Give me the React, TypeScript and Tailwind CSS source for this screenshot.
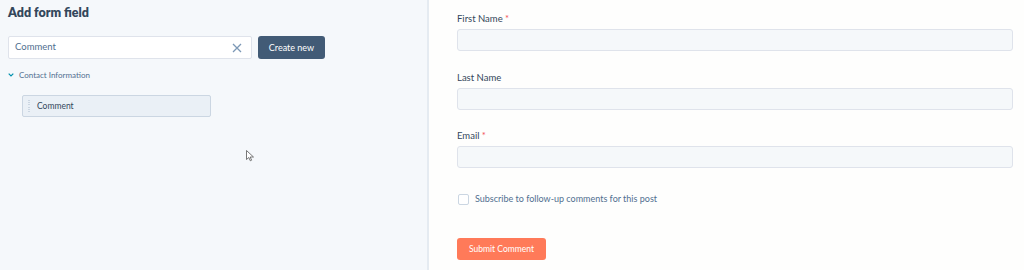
import React from "react";

function Field({ label, required, mt }: { label: string; required?: boolean; mt: string }) {
  return (
    <div className={`flex flex-col ${mt}`}>
      <div className="h-[12px] text-[9.5px] leading-[12px] text-[#33475b]">
        {label}
        {required && <span className="text-[#f2545b]"> *</span>}
      </div>
      <div className="mt-[4px] h-[22px] w-[556px] rounded-[3px] border border-[#dfe3eb] bg-[#f5f8fa]" />
    </div>
  );
}

export default function App() {
  return (
    <div
      className="flex h-[270px] w-[1024px] overflow-hidden"
      style={{ fontFamily: "Lato, 'Noto Sans', sans-serif" }}
    >
      {/* Left panel */}
      <div className="relative flex h-full w-[427px] flex-col bg-[#f5f8fb] pl-[8px]">
        <div className="mt-[5px] h-[16px] text-[12.5px] font-extrabold leading-[16px] text-[#33475b]">Add form field</div>
        <div className="mt-[15px] flex items-center gap-[6px]">
          <div className="flex h-[23px] w-[244px] items-center justify-between rounded-[2px] border border-[#dfe3eb] bg-white pl-[6px] pr-[9px]">
            <span className="text-[9.5px] text-[#516f90]">Comment</span>
            <svg width="10" height="10" viewBox="0 0 10 10" className="text-[#7c98b6]">
              <path d="M1 1 L9 9 M9 1 L1 9" stroke="currentColor" strokeWidth="1.3" />
            </svg>
          </div>
          <button className="h-[23px] w-[67px] rounded-[3px] bg-[#425b76] text-[9px] text-white">
            Create new
          </button>
        </div>
        <div className="mt-[10px] flex items-center">
          <svg width="6" height="4" viewBox="0 0 6 4" className="mr-[5px] text-[#0091ae]">
            <path d="M0.7 0.7 L3 3 L5.3 0.7" stroke="currentColor" strokeWidth="1.2" fill="none" />
          </svg>
          <span className="text-[8px] text-[#516f90]">Contact Information</span>
        </div>
        <div className="ml-[14px] mt-[14px] flex h-[22px] w-[189px] items-center rounded-[2px] border border-[#cbd6e2] bg-[#eaf0f6]">
          <div className="ml-[5px] flex h-[12px] w-[2px] flex-col justify-between">
            {[0, 1, 2, 3, 4, 5].map((i) => (
              <div key={i} className="h-[1px] w-[2px] bg-[#cbd6e2]" />
            ))}
          </div>
          <span className="ml-[7px] text-[8.5px] text-[#33475b]">Comment</span>
        </div>
        {/* cursor */}
        <svg className="absolute left-[246px] top-[150px]" width="9" height="12" viewBox="0 0 9 12">
          <path d="M0.5 0.5 L0.5 9.5 L2.8 7.5 L4.3 10.8 L5.6 10.2 L4.2 7 L7.5 7 Z" fill="white" stroke="#555" strokeWidth="0.8" />
        </svg>
      </div>
      <div className="h-full w-[2px] bg-[#e5ebf1]" />
      {/* Right panel */}
      <div className="flex h-full flex-1 flex-col bg-[#fefefd] pl-[28px]">
        <Field label="First Name" required mt="mt-[13px]" />
        <Field label="Last Name" mt="mt-[21px]" />
        <Field label="Email" required mt="mt-[20px]" />
        <div className="mt-[25px] flex h-[12px] items-center">
          <div className="ml-[1px] h-[11px] w-[11px] rounded-[2px] border border-[#cbd6e2] bg-white" />
          <span className="ml-[6px] text-[9px] text-[#516f90]">Subscribe to follow-up comments for this post</span>
        </div>
        <button className="mt-[33px] h-[22px] w-[89px] rounded-[3px] bg-[#ff7a59] text-[8.5px] text-white">
          Submit Comment
        </button>
      </div>
    </div>
  );
}
